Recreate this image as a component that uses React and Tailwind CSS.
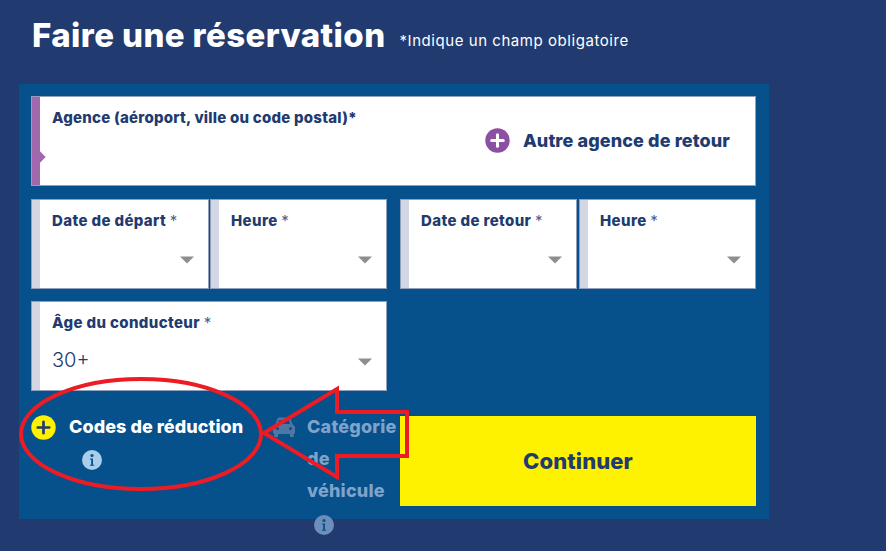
import React from "react";

function Caret() {
  return (
    <svg width="14" height="9" viewBox="0 0 14 9" className="absolute right-[14px] bottom-[24px]">
      <path d="M0 1.500h14L7 8.500z" fill="#8c8f92" />
    </svg>
  );
}

function Field({ label, value, className = "" }) {
  return (
    <div className={"relative h-[90px] flex bg-white border border-[#8fa0bd] " + className}>
      <div className="w-[8px] shrink-0 bg-[#d3d7e3]" />
      <div className="pl-[12px] pt-[11px] min-w-0">
        <div className="text-[15px] leading-[20px] tracking-[0.38px] font-extrabold text-[#213a70] whitespace-nowrap">
          {label} <span className="font-normal text-[#4a5f8f]">*</span>
        </div>
        {value && <div className="mt-[13px] text-[20px] leading-[28px] font-light text-[#213a70]">{value}</div>}
      </div>
      <Caret />
    </div>
  );
}

function Plus({ bg, fg, size, t }) {
  return (
    <svg width={size} height={size} viewBox="0 0 26 26" className="shrink-0">
      <circle cx="13" cy="13" r="12.700" fill={bg} />
      <path d="M13 7v12M7 13h12" stroke={fg} strokeWidth={t} strokeLinecap="round" />
    </svg>
  );
}

function Info({ bg, fg }) {
  return (
    <svg width="20" height="20" viewBox="0 0 20 20">
      <circle cx="10" cy="10" r="10" fill={bg} />
      <circle cx="10" cy="5.500" r="1.600" fill={fg} />
      <path d="M8 8.500h3v6.200h1.200v1H8v-1h1.200V9.500H8z" fill={fg} />
    </svg>
  );
}

function Car() {
  return (
    <svg width="24" height="22" viewBox="0 0 24 22">
      <path
        d="M5 3.500C5.500 2 6.500 1.500 8 1.500h8c1.500 0 2.500.5 3 2l1.500 5c1.500.5 2.500 1.500 2.500 3v5c0 .8-.5 1.300-1.200 1.500v2c0 .6-.4 1-1 1h-2c-.6 0-1-.4-1-1v-2H6.200v2c0 .6-.4 1-1 1h-2c-.6 0-1-.4-1-1v-2C1.500 17.300 1 16.800 1 16v-4.500c0-1.500 1-2.500 2.500-3z"
        fill="#4f77a3"
      />
      <path d="M7 4h10l1 4H6z" fill="#06508c" />
      <circle cx="5.500" cy="12.500" r="1.500" fill="#06508c" />
      <circle cx="18.500" cy="12.500" r="1.500" fill="#06508c" />
    </svg>
  );
}

export default function App() {
  return (
    <div className="relative w-[886px] h-[551px] overflow-hidden bg-[#213a70] font-['Inter',sans-serif]">
      <header className="h-[84px] pl-[32px] pt-[13px] flex items-start text-white">
        <h1 className="text-[33px] leading-[44px] font-extrabold tracking-[0.4px] whitespace-nowrap">
          Faire une réservation
        </h1>
        <p className="ml-[14px] mt-[18px] text-[15px] leading-[20px] tracking-[0.55px] whitespace-nowrap">
          *Indique un champ obligatoire
        </p>
      </header>

      <main className="ml-[19px] w-[750px] h-[435px] bg-[#06508c] pl-[12px] pt-[12px]">
        <div className="relative h-[90px] w-[725px] flex bg-white border border-[#8fa0bd]">
          <div className="relative w-[8px] shrink-0 bg-[#a268ae]">
            <div className="absolute left-[4px] top-[56px] w-[8px] h-[8px] rotate-45 bg-[#a268ae]" />
          </div>
          <div className="pl-[12px] pt-[11px] text-[15px] leading-[20px] tracking-[0.23px] font-extrabold text-[#213a70] whitespace-nowrap">
            Agence (aéroport, ville ou code postal)*
          </div>
          <div className="ml-auto pr-[25px] pb-[2px] flex items-center gap-[13px] text-[18px] tracking-[0.11px] font-extrabold text-[#213a70] whitespace-nowrap">
            <Plus bg="#8b4fa3" fg="#fff" size={25} t={3.200} />
            Autre agence de retour
          </div>
        </div>

        <div className="mt-[13px] w-[725px] grid grid-cols-[356px_356px] gap-x-[13px] gap-y-[12px]">
          <div className="flex gap-[1px]">
            <Field label="Date de départ" className="w-[178px]" />
            <Field label="Heure" className="w-[177px]" />
          </div>
          <div className="flex gap-[2px]">
            <Field label="Date de retour" className="w-[177px]" />
            <Field label="Heure" className="w-[177px]" />
          </div>
          <Field label="Âge du conducteur" value="30+" />
        </div>

        <div className="mt-[23px] w-[725px] h-[92px] flex">
          <div className="w-[241px] shrink-0 flex flex-col">
            <div className="flex items-center gap-[13px] text-[18px] leading-[26px] tracking-[0.05px] font-extrabold text-white whitespace-nowrap">
              <Plus bg="#fff200" fg="#213a70" size={25} t={2.800} />
              Codes de réduction
            </div>
            <div className="ml-[51px] mt-[10px]">
              <Info bg="#a9cdeb" fg="#06508c" />
            </div>
          </div>
          <div className="w-[128px] shrink-0 flex items-start">
            <div className="mt-[2px]"><Car /></div>
            <div className="ml-[11px] text-[18px] leading-[32px] tracking-[0.2px] font-extrabold text-[#7fa3c9] -mt-[3px]">
              <div>Catégorie</div>
              <div>de</div>
              <div>véhicule</div>
              <div className="ml-[7px] mt-[8px]">
                <Info bg="#6d8dba" fg="#06508c" />
              </div>
            </div>
          </div>
          <button className="w-[356px] h-[90px] mt-[2px] bg-[#fff200] text-[22px] tracking-[0.1px] font-extrabold text-[#213a70]">
            Continuer
          </button>
        </div>
      </main>

      <svg className="absolute inset-0 pointer-events-none" width="886" height="551" viewBox="0 0 886 551">
        <ellipse cx="141" cy="434" rx="120" ry="55" fill="none" stroke="#ed1c24" strokeWidth="4" />
        <path d="M264 433 337 389V412H407V456H337V477Z" fill="none" stroke="#ed1c24" strokeWidth="4" />
      </svg>
    </div>
  );
}
